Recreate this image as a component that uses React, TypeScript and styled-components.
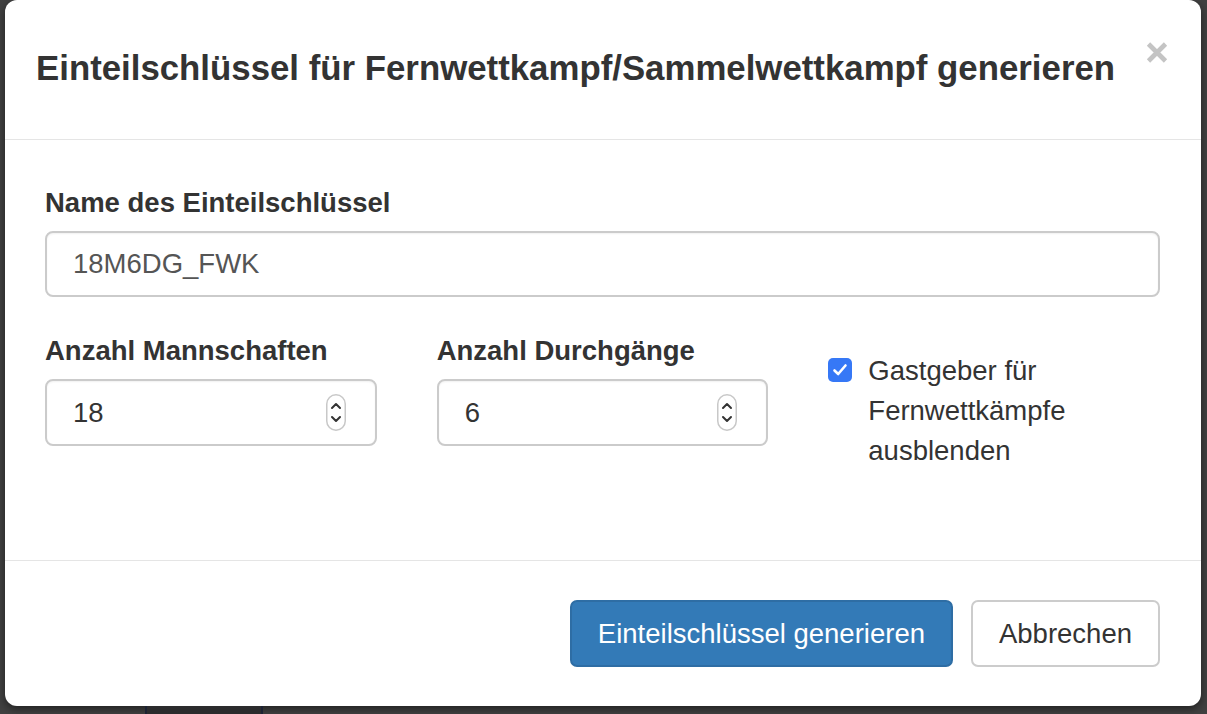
import React, { useState } from 'react';
import styled, { createGlobalStyle } from 'styled-components';

const GlobalStyle = createGlobalStyle`
  html, body {
    margin: 0;
    padding: 0;
    background: #404040;
    font-family: "Liberation Sans", Arial, Helvetica, sans-serif;
  }
  * {
    box-sizing: border-box;
  }
`;

const Backdrop = styled.div`
  width: 1207px;
  height: 714px;
  overflow: hidden;
  padding: 0 6px 0 5px;
  background: #414141;
`;

const Modal = styled.div`
  width: 1196px;
  height: 706px;
  background: #fff;
  border-radius: 12px;
  box-shadow: 0 3px 9px rgba(0, 0, 0, 0.5);
  display: flex;
  flex-direction: column;
  overflow: hidden;
`;

const PageStrip = styled.div`
  margin-left: 140px;
  width: 118px;
  height: 8px;
  background: #2b2b2d;
  border-left: 2px solid #1c2233;
  border-right: 2px solid #1c2233;
`;

const Header = styled.div`
  height: 140px;
  display: flex;
  justify-content: space-between;
  align-items: center;
  padding: 0 33px 0 31px;
  border-bottom: 1px solid #e5e5e5;
`;

const Title = styled.h4`
  margin: 0 0 2px;
  font-size: 34.8px;
  font-weight: bold;
  color: #333;
  line-height: 1.1;
`;

const CloseButton = styled.button`
  align-self: flex-start;
  margin-top: 42px;
  padding: 0;
  border: none;
  background: none;
  cursor: pointer;
  display: flex;
`;

const Body = styled.div`
  padding: 44px 41px 0 40px;
  flex: 1;
`;

const FormGroup = styled.div`
  margin-bottom: 35px;
`;

const Label = styled.label`
  display: block;
  font-size: 27.5px;
  font-weight: bold;
  color: #333;
  line-height: 38px;
  margin-bottom: 9px;
`;

const TextInput = styled.input`
  display: block;
  width: 100%;
  height: 66px;
  padding: 0 26px;
  border: 2px solid #cbcbcb;
  border-radius: 8px;
  font-family: inherit;
  font-size: 27.5px;
  color: #555;
  background: #fff;
  outline: none;
  box-shadow: inset 0 1px 2px rgba(0, 0, 0, 0.06);
`;

const Row = styled.div`
  display: grid;
  grid-template-columns: repeat(3, minmax(0, 1fr));
  column-gap: 60px;
`;

const NumberField = styled.div`
  height: 67px;
  display: flex;
  align-items: center;
  padding: 0 29px 0 26px;
  border: 2px solid #cbcbcb;
  border-radius: 8px;
  box-shadow: inset 0 1px 2px rgba(0, 0, 0, 0.06);
`;

const NumberInput = styled.input`
  flex: 1;
  min-width: 0;
  border: none;
  outline: none;
  padding: 0;
  font-family: inherit;
  font-size: 27.5px;
  color: #333;
  background: transparent;
`;

const CheckColumn = styled.label`
  display: flex;
  align-items: flex-start;
  gap: 16px;
  padding-top: 19px;
  cursor: pointer;
`;

const CheckBox = styled.span<{ $checked: boolean }>`
  flex: none;
  width: 24px;
  height: 24px;
  margin-top: 7px;
  border-radius: 5px;
  background: ${({ $checked }) => ($checked ? '#3678f6' : '#fff')};
  border: ${({ $checked }) => ($checked ? 'none' : '1px solid #999')};
  display: flex;
  align-items: center;
  justify-content: center;
`;

const CheckText = styled.span`
  font-size: 27.5px;
  line-height: 40px;
  color: #333;
`;

const Footer = styled.div`
  height: 146px;
  border-top: 1px solid #e5e5e5;
  display: flex;
  justify-content: flex-end;
  align-items: flex-start;
  gap: 18px;
  padding: 39px 41px 0 0;
`;

const Button = styled.button<{ $primary?: boolean }>`
  height: 67px;
  padding: 0 26px;
  border-radius: 7px;
  font-family: inherit;
  font-size: 27.5px;
  cursor: pointer;
  border: 2px solid ${({ $primary }) => ($primary ? '#2e6da4' : '#ccc')};
  background: ${({ $primary }) => ($primary ? '#337ab7' : '#fff')};
  color: ${({ $primary }) => ($primary ? '#fff' : '#333')};
`;

const Spinner = () => (
  <svg width="20" height="37" viewBox="0 0 20 37">
    <rect x="0.75" y="0.75" width="18.5" height="35.5" rx="9.25" fill="#fff" stroke="#c8c8c8" strokeWidth="1.5" />
    <path d="M6 14 L10 10 L14 14" fill="none" stroke="#333" strokeWidth="2" strokeLinecap="round" strokeLinejoin="round" />
    <path d="M6 23 L10 27 L14 23" fill="none" stroke="#333" strokeWidth="2" strokeLinecap="round" strokeLinejoin="round" />
  </svg>
);

const App: React.FC = () => {
  const [name, setName] = useState('18M6DG_FWK');
  const [teams, setTeams] = useState('18');
  const [rounds, setRounds] = useState('6');
  const [hideHost, setHideHost] = useState(true);

  return (
    <>
      <GlobalStyle />
      <Backdrop>
        <Modal>
          <Header>
            <Title>Einteilschlüssel für Fernwettkampf/Sammelwettkampf generieren</Title>
            <CloseButton aria-label="Schließen">
              <svg width="22" height="21" viewBox="0 0 22 21">
                <path d="M2.5 2 L19.5 19 M19.5 2 L2.5 19" stroke="#c4c4c4" strokeWidth="4.6" />
              </svg>
            </CloseButton>
          </Header>
          <Body>
            <FormGroup>
              <Label>Name des Einteilschlüssel</Label>
              <TextInput value={name} onChange={(e) => setName(e.target.value)} />
            </FormGroup>
            <Row>
              <div>
                <Label>Anzahl Mannschaften</Label>
                <NumberField>
                  <NumberInput value={teams} onChange={(e) => setTeams(e.target.value)} />
                  <Spinner />
                </NumberField>
              </div>
              <div>
                <Label>Anzahl Durchgänge</Label>
                <NumberField>
                  <NumberInput value={rounds} onChange={(e) => setRounds(e.target.value)} />
                  <Spinner />
                </NumberField>
              </div>
              <CheckColumn onClick={() => setHideHost(!hideHost)}>
                <CheckBox $checked={hideHost}>
                  {hideHost && (
                    <svg width="16" height="14" viewBox="0 0 16 14">
                      <path d="M2.5 7.5 L6.2 11 L13.5 2.5" fill="none" stroke="#fff" strokeWidth="2.6" strokeLinecap="round" strokeLinejoin="round" />
                    </svg>
                  )}
                </CheckBox>
                <CheckText>
                  Gastgeber für
                  <br />
                  Fernwettkämpfe
                  <br />
                  ausblenden
                </CheckText>
              </CheckColumn>
            </Row>
          </Body>
          <Footer>
            <Button $primary>Einteilschlüssel generieren</Button>
            <Button>Abbrechen</Button>
          </Footer>
        </Modal>
        <PageStrip />
      </Backdrop>
    </>
  );
};

export default App;
